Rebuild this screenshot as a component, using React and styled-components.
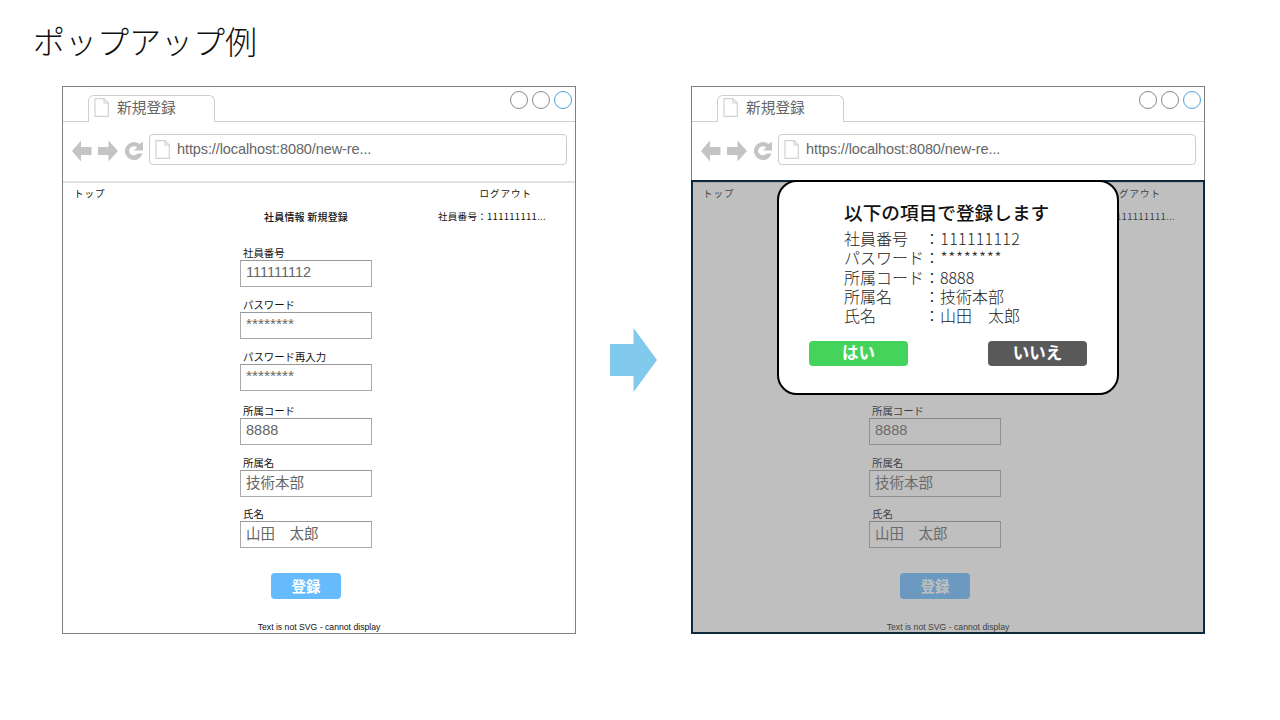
import React from "react";
import styled, { createGlobalStyle } from "styled-components";

const Global = createGlobalStyle`
  html, body { margin: 0; padding: 0; background: #fff; }
  body { font-family: "Liberation Sans", "Noto Sans CJK JP", sans-serif; }
`;
const JP = `"Noto Sans CJK JP", "Liberation Sans", sans-serif`;
const LATIN = `"Liberation Sans", "Noto Sans CJK JP", sans-serif`;

const Slide = styled.div`
  width: 1280px; height: 720px; box-sizing: border-box; overflow: hidden;
  padding-left: 34px; background: #fff;
`;
const Title = styled.h1`
  margin: 0 0 0 -1px; height: 86px; box-sizing: border-box; padding-top: 17px;
  font: 300 32px/46px ${JP}; color: #111;
`;
const Row = styled.div`
  display: flex; align-items: center; margin-left: 28px;
`;
const ArrowWrap = styled.svg`
  width: 47px; height: 64px; margin: 0 34px; flex: none; display: block;
`;
const Win = styled.div`
  position: relative; width: 514px; height: 548px; box-sizing: border-box; flex: none;
  border: 1px solid #808080; background: #fff; display: flex; flex-direction: column;
`;
const TabBar = styled.div`
  height: 35px; box-sizing: border-box; border-bottom: 1px solid #d0d0d0;
  display: flex; justify-content: space-between; align-items: flex-start; padding: 8px 3px 0 25px;
`;
const Tab = styled.div`
  width: 127px; height: 27px; box-sizing: border-box; border: 1px solid #cfcfcf; border-bottom: 0;
  border-radius: 6px 6px 0 0; background: #fff; display: flex; align-items: center;
  padding: 0 0 3px 5px; gap: 8px; font: 400 14.7px/1 ${JP}; color: #666;
`;
const Dots = styled.div`
  display: flex; gap: 4px; margin-top: -4px;
`;
const Dot = styled.span`
  width: 18px; height: 18px; box-sizing: border-box; border-radius: 50%;
  border: 1px solid ${p => (p.$active ? "#4aa3e0" : "#8a8a8a")}; background: #fff;
`;
const AddressRow = styled.div`
  height: 61px; box-sizing: border-box; border-bottom: 2px solid #e2e2e2;
  display: flex; align-items: center; padding: 0 8px 4px 9px;
`;
const NavIcons = styled.svg`
  width: 77px; height: 24px; flex: none; display: block; margin-top: 2px;
`;
const Address = styled.div`
  flex: 1; height: 31px; box-sizing: border-box; border: 1px solid #cdcdcd; border-radius: 4px;
  display: flex; align-items: center; padding-left: 5px; gap: 7px;
  font: 400 14.5px/1 ${LATIN}; letter-spacing: -0.1px; color: #666;
`;
const Content = styled.div`
  flex: 1; display: flex; flex-direction: column; position: relative; padding: 0;
`;
const TopRow = styled.div`
  display: flex; justify-content: space-between; height: 22px; align-items: center;
  padding: 0 43px 0 11px; font: 400 9.5px/1 ${JP}; color: #111; letter-spacing: 1px;
`;
const SubRow = styled.div`
  display: flex; height: 22px; align-items: center; margin-top: 1px;
  font: 400 9.5px/1 ${JP}; color: #111;
`;
const SubTitle = styled.div`
  margin-left: 201px; width: 174px; font-size: 10px; letter-spacing: .2px; font-weight: 500;
`;
const UserId = styled.div`
  letter-spacing: .3px;
`;
const Form = styled.div`
  display: flex; flex-direction: column; margin-left: 177px; width: 132px;
`;
const Field = styled.div`
  margin-top: ${p => p.$top}px;
`;
const Label = styled.div`
  height: 12px; padding-left: 3px; font: 400 10.4px/10px ${JP}; color: #111; white-space: nowrap;
`;
const InputBox = styled.div`
  width: 132px; height: 27px; box-sizing: border-box; border: 1px solid #a9a9a9; border-top-color: #999;
  padding: 0 0 ${p => (p.$kind === "stars" ? 3 : 2)}px 5px; display: flex; align-items: center; background: #fff;
  font: 400 ${p => (p.$kind === "stars" ? 15.4 : 14.5)}px/1 ${p => (p.$kind ? LATIN : JP)}; color: #666;
`;
const Submit = styled.div`
  width: 70px; height: 26px; margin: 25px 0 0 31px; border-radius: 4px; background: #66bbff; color: #fff;
  display: flex; align-items: center; justify-content: center; font: 700 14.5px/1 ${JP};
`;
const Foot = styled.div`
  position: absolute; left: 0; right: 0; bottom: 0; text-align: center;
  font: 400 8.67px/12px ${LATIN}; color: #111;
`;
const Overlay = styled.div`
  position: absolute; left: -1px; right: -1px; top: -3px; bottom: -1px; box-sizing: border-box;
  background: rgba(113,113,113,.45); border: 2px solid #0d2a3c;
`;
const Popup = styled.div`
  position: absolute; left: 85px; top: -3px; width: 342px; height: 215px; box-sizing: border-box;
  border: 2px solid #000; border-radius: 20px; background: #fff; padding: 18px 29px 0 65px;
  color: #222;
`;
const PopTitle = styled.div`
  font: 500 18.67px/24px ${JP}; color: #111; height: 24px;
`;
const Summary = styled.div`
  display: grid; grid-template-columns: 80px 1fr; grid-auto-rows: 19.3px; margin-top: 5px;
  font: 300 16px/19.3px ${JP}; color: #222;
`;
const Term = styled.div``;
const Val = styled.div`
  letter-spacing: ${p => p.$track || 0}px;
`;
const Actions = styled.div`
  display: flex; justify-content: space-between; margin: 16px 1px 0 -35px;
`;
const PopBtn = styled.div`
  width: 99px; height: 25px; border-radius: 4px; background: ${p => (p.$no ? "#595959" : "#44d45c")};
  color: #fff; display: flex; align-items: center; justify-content: center; padding-bottom: 3px; box-sizing: border-box;
  font: 700 16.5px/1 ${JP};
`;

const Doc = () => (
  <svg width="15" height="19" viewBox="0 0 15 19" style={{ flex: "none" }}>
    <path d="M1 .7H10L14.3 5V18.3H1Z M10 .7V5H14.3" fill="#fff" stroke="#d2d2d2" strokeWidth="1.2" />
  </svg>
);

const Nav = () => (
  <NavIcons viewBox="0 0 77 24">
    <path d="M0 12 9 1.5V8H19.5V16H9V22.5Z" fill="#c4c4c4" />
    <path d="M46 12 36.5 1.5V8H26V16H36.5V22.5Z" fill="#c4c4c4" />
    <path d="M67.5 5A9 9 0 1 0 70.6 14.5H65.5A4.6 4.6 0 1 1 65 8.5L62 11.5H71V2.5Z" fill="#c4c4c4" />
  </NavIcons>
);

const fields = [
  ["社員番号", "111111112", 0, "num"],
  ["パスワード", "********", 13, "stars"],
  ["パスワード再入力", "********", 13, "stars"],
  ["所属コード", "8888", 15, "num"],
  ["所属名", "技術本部", 13, ""],
  ["氏名", "山田　太郎", 12, ""],
];
const summary = [
  ["社員番号", "：111111112", 0.3],
  ["パスワード", "：********", 0.6],
  ["所属コード", "：8888", 0],
  ["所属名", "：技術本部", 0],
  ["氏名", "：山田　太郎", 0],
];

const BrowserWindow = ({ children }) => (
  <Win>
    <TabBar>
      <Tab><Doc />新規登録</Tab>
      <Dots><Dot /><Dot /><Dot $active /></Dots>
    </TabBar>
    <AddressRow>
      <Nav />
      <Address><Doc />https://localhost:8080/new-re...</Address>
    </AddressRow>
    <Content>
      <TopRow><span>トップ</span><span>ログアウト</span></TopRow>
      <SubRow><SubTitle>社員情報 新規登録</SubTitle><UserId>社員番号：111111111...</UserId></SubRow>
      <Form>
        <Field $top={20} />
        {fields.map(([l, v, t, kind]) => (
          <Field key={l} $top={t}>
            <Label>{l}</Label>
            <InputBox $kind={kind}>{v}</InputBox>
          </Field>
        ))}
        <Submit>登録</Submit>
      </Form>
      <Foot>Text is not SVG - cannot display</Foot>
      {children}
    </Content>
  </Win>
);

export default function App() {
  return (
    <>
      <Global />
      <Slide>
        <Title>ポップアップ例</Title>
        <Row>
          <BrowserWindow />
          <ArrowWrap viewBox="0 0 47 64">
            <path d="M0 16H23.5V0L47 32 23.5 64V48H0Z" fill="#82caed" />
          </ArrowWrap>
          <BrowserWindow>
            <Overlay />
            <Popup>
              <PopTitle>以下の項目で登録します</PopTitle>
              <Summary>
                {summary.map(([a, b, t]) => (
                  <React.Fragment key={a}><Term>{a}</Term><Val $track={t}>{b}</Val></React.Fragment>
                ))}
              </Summary>
              <Actions>
                <PopBtn>はい</PopBtn>
                <PopBtn $no>いいえ</PopBtn>
              </Actions>
            </Popup>
          </BrowserWindow>
        </Row>
      </Slide>
    </>
  );
}
